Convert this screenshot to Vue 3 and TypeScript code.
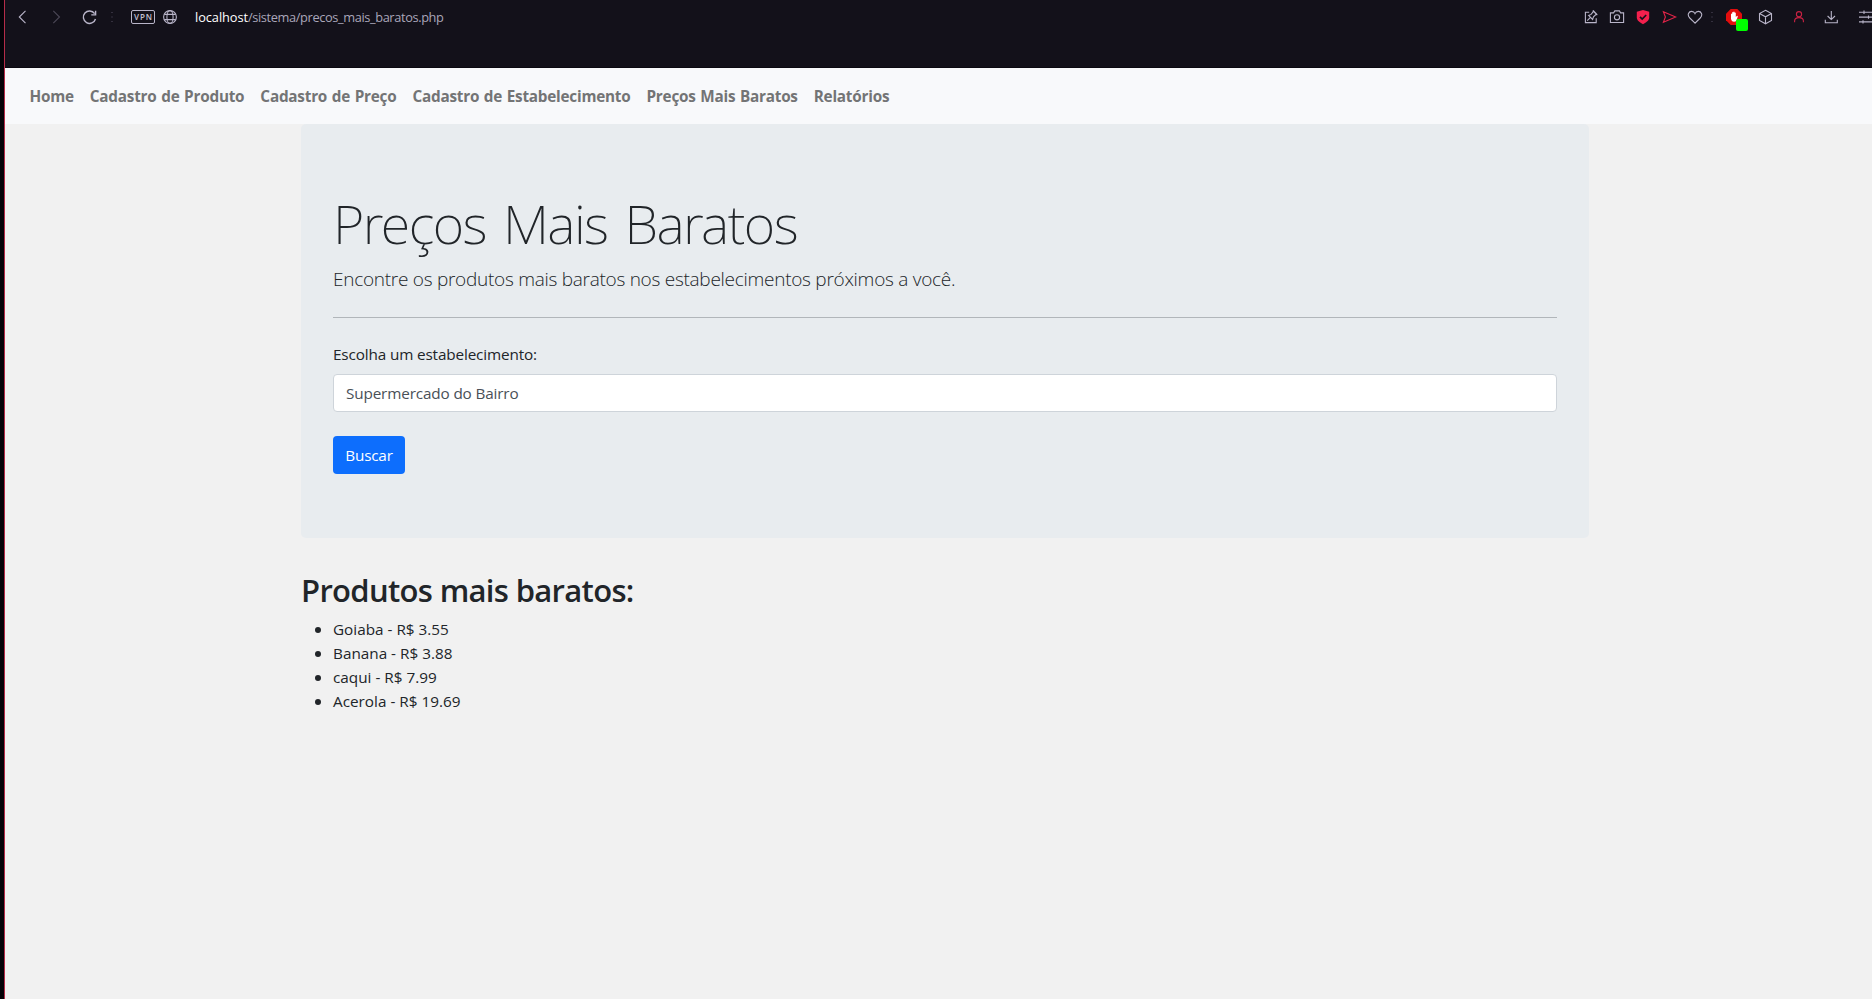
<script setup lang="ts">
interface Product {
  name: string
  price: string
}

const links: string[] = [
  'Home',
  'Cadastro de Produto',
  'Cadastro de Preço',
  'Cadastro de Estabelecimento',
  'Preços Mais Baratos',
  'Relatórios',
]

const products: Product[] = [
  { name: 'Goiaba', price: '3.55' },
  { name: 'Banana', price: '3.88' },
  { name: 'caqui', price: '7.99' },
  { name: 'Acerola', price: '19.69' },
]
</script>

<template>
  <div class="window">
    <header class="toolbar">
      <svg class="icon" viewBox="0 0 16 16"><path d="M11.5 1.8 5.3 8l6.2 6.2" /></svg>
      <svg class="icon forward" viewBox="0 0 16 16"><path d="M5.3 1.8 11.5 8l-6.2 6.2" /></svg>
      <svg class="icon reload" viewBox="0 0 16 16"><path d="M13.6 4.6A6.2 6.2 0 1 0 14.5 10M14.6 1.8v4.1h-4.3" /></svg>
      <svg class="dots" viewBox="0 0 4 16"><path d="M1 3h2v1H1zM1 7.5h2v1H1zM1 12h2v1H1z" /></svg>
      <span class="vpn">VPN</span>
      <svg class="icon globe" viewBox="0 0 16 16"><circle cx="8" cy="8" r="6.4" /><ellipse cx="8" cy="8" rx="3.1" ry="6.4" /><path d="M2.4 5.4h11.2M2.4 10.6h11.2" /></svg>
      <p class="url"><span class="host">localhost</span>/sistema/precos_mais_baratos.php</p>

      <svg class="icon first" viewBox="0 0 16 16"><path d="M6.2 3.3H2.4v10.3h10.8V9.3M4.2 11.6l3-3M5.6 6.4l4 4 .9-2.6 3-2.8-2.8-2.9-2.6 3.3zM9.7 1.7l4.6 4.3" /></svg>
      <svg class="icon camera" viewBox="0 0 16 16"><path d="M1.4 3.9h3.2l1.2-2h4.6l1.2 2h3v9.6H1.4z" /><circle cx="8" cy="8.3" r="2.6" /></svg>
      <svg class="icon shield" viewBox="0 0 16 16"><path class="red-fill" d="M8 1 14.2 2.8v5.8c0 3-2.9 5-6.2 6.6-3.3-1.6-6.2-3.6-6.2-6.6V2.8z" /><path class="check" d="m5 7.8 2.2 2.2 4-4" /></svg>
      <svg class="icon plane" viewBox="0 0 16 16"><path class="red-line" d="M2.4 2.8 14.8 8 2.4 13.3l2-5.3z" /></svg>
      <svg class="icon heart" viewBox="0 0 16 16"><path d="M8 14.2 2.8 9C-.4 5.6 2 2.4 4.6 2.4 6.4 2.4 7.5 3.4 8 4.6c.5-1.2 1.6-2.2 3.4-2.2 2.6 0 5 3.2 1.8 6.6z" /></svg>
      <svg class="dots right-dots" viewBox="0 0 4 16"><path d="M1 3h2v1H1zM1 7.5h2v1H1zM1 12h2v1H1z" /></svg>
      <svg class="blocker" viewBox="0 0 22 22">
        <path class="octagon" d="M4.7 0h6.6L16 4.7v6.6L11.3 16H4.7L0 11.3V4.7z" />
        <path class="hand" d="M5 5q.6-.8 1.1 0V3.5q.6-.8 1.2 0V3q.7-.8 1.3 0v.8q.7-.7 1.2.1V8l1.3-1.3q.8 0 .7.7L10.3 12q-2.3 1.6-4.4 0L5 10z" />
        <rect class="status" x="10" y="10" width="12" height="12" rx="2" />
      </svg>
      <svg class="icon cube" viewBox="0 0 16 16"><path d="m8.5 1.3 6 3.2v7l-6 3.3-6-3.3v-7zM2.5 4.5l6 3.3 6-3.3M8.5 7.8v7" /></svg>
      <svg class="icon person" viewBox="0 0 16 16"><circle class="red-line" cx="8" cy="5.2" r="2.6" /><path class="red-line" d="M3.6 13.2V12c0-2.3 1.6-3.4 4.4-3.4s4.4 1.1 4.4 3.4v1.2" /></svg>
      <svg class="icon download" viewBox="0 0 16 16"><path d="M8.3 2v8.4M4.6 7l3.7 3.6L12 7M2.3 10.8v3h12v-3" /></svg>
      <svg class="sliders" viewBox="0 0 14 16"><path d="M1 3.3h13M1 8.1h13M1 12.9h13M6 1.6V5M10.5 6.4v3.4M5 11.2v3.4" /></svg>
    </header>

    <nav class="navbar">
      <a v-for="link in links" :key="link" href="#">{{ link }}</a>
    </nav>

    <main class="container">
      <section class="jumbotron">
        <h1>Preços Mais Baratos</h1>
        <p class="lead">Encontre os produtos mais baratos nos estabelecimentos próximos a você.</p>
        <hr />
        <label>Escolha um estabelecimento:</label>
        <div class="field">Supermercado do Bairro</div>
        <button type="button">Buscar</button>
      </section>
      <h2>Produtos mais baratos:</h2>
      <ul>
        <li v-for="product in products" :key="product.name">{{ product.name }} - R$ {{ product.price }}</li>
      </ul>
    </main>
  </div>
</template>

<style>
body {
  background: #f1f1f1;
}
</style>

<style scoped>
* {
  box-sizing: border-box;
}

.window {
  width: 100%;
  height: 999px;
  overflow: hidden;
  border-left: 4px solid #050308;
  box-shadow: inset 1px 0 #b52c49;
  padding-left: 1px;
  background: #f1f1f1;
  color: #212529;
  font: 15.3px/24px 'Open Sans', 'Noto Sans', sans-serif;
}

.toolbar {
  display: flex;
  align-items: flex-start;
  height: 68px;
  padding: 9px 0 0 9px;
  background: #13111a;
  border-bottom: 1px solid #0b0911;
}

svg {
  flex: none;
  display: block;
  fill: none;
  stroke: #b9b5c9;
  stroke-width: 1.1;
}

.icon {
  width: 16px;
  height: 16px;
}

.forward { margin-left: 18px; stroke: #4b4756; }
.reload { margin-left: 17px; stroke-width: 1.4; }
.dots { width: 4px; height: 16px; margin-left: 13px; fill: #34303e; stroke: none; }

.vpn {
  flex: none;
  width: 24px;
  height: 14px;
  margin: 1px 0 0 17px;
  border: 1px solid #b9b5c9;
  border-radius: 2px;
  color: #c5c1d2;
  font: 600 8px/12px 'Open Sans', sans-serif;
  letter-spacing: 0.9px;
  text-align: center;
  text-indent: 1px;
}

.globe { margin-left: 7px; }

.url {
  margin: -1px 0 0 17px;
  color: #aaa6b9;
  font-size: 12.8px;
  line-height: 18px;
  letter-spacing: -0.38px;
  white-space: nowrap;
}

.host {
  color: #fff;
  letter-spacing: -0.07px;
}

.first { margin-left: auto; }
.camera,
.shield,
.plane,
.heart { margin-left: 10px; }
.right-dots { margin-left: 7px; }
.red-fill { fill: #f3204d; stroke: none; }
.red-line { stroke: #e62549; }
.person .red-line { stroke: #c92243; }
.check { stroke: #13111a; stroke-width: 1.7; }
.blocker { width: 22px; height: 22px; margin-left: 12px; stroke: none; }
.octagon { fill: #e20d0d; }
.hand { fill: #fff; }
.status { fill: #0f0; }
.cube { margin-left: 9px; }
.person { margin-left: 18px; }
.download { margin-left: 16px; }
.sliders { width: 14px; height: 16px; margin-left: 19px; }

.navbar {
  display: flex;
  gap: 16px;
  align-items: center;
  height: 56px;
  padding-left: 24.5px;
  background: #f8f9fb;
}

.navbar a {
  color: #737475;
  font-weight: 700;
  letter-spacing: -0.23px;
  word-spacing: 0.9px;
  text-decoration: none;
  white-space: nowrap;
}

.container {
  width: 1288px;
  margin-left: 296px;
}

.jumbotron {
  height: 414px;
  padding: 66px 32px 64px;
  border-radius: 5px;
  background: #e8ecef;
}

h1 {
  margin: 0 0 7px;
  font: 200 54px/67px 'Noto Sans', 'Open Sans', sans-serif;
  letter-spacing: -1.55px;
  word-spacing: 4.5px;
}

.lead {
  margin: 0;
  font-size: 19px;
  font-weight: 300;
  line-height: 30px;
  letter-spacing: -0.27px;
}

hr {
  height: 1px;
  margin: 23px 0 24px;
  border: 0;
  background: #b1b6ba;
}

label {
  display: block;
  margin-bottom: 8px;
  letter-spacing: -0.14px;
}

.field {
  height: 38px;
  padding: 6px 12px;
  border: 1px solid #ced4da;
  border-radius: 4px;
  background: #fff;
  color: #495057;
  letter-spacing: -0.15px;
}

button {
  width: 72px;
  height: 38px;
  margin-top: 24px;
  padding: 0;
  border: 0;
  border-radius: 4px;
  background: #0d6efd;
  color: #fff;
  font: inherit;
  letter-spacing: -0.2px;
}

h2 {
  margin: 33px 0 8px;
  font-size: 31px;
  font-weight: 600;
  line-height: 38px;
  letter-spacing: -0.67px;
}

ul {
  margin: 0;
  padding-left: 32px;
  list-style: none;
}

li::before {
  content: '';
  display: inline-block;
  width: 6px;
  height: 6px;
  margin: 0 12px 0 -18px;
  border-radius: 50%;
  background: #212529;
  vertical-align: 2px;
}
</style>
